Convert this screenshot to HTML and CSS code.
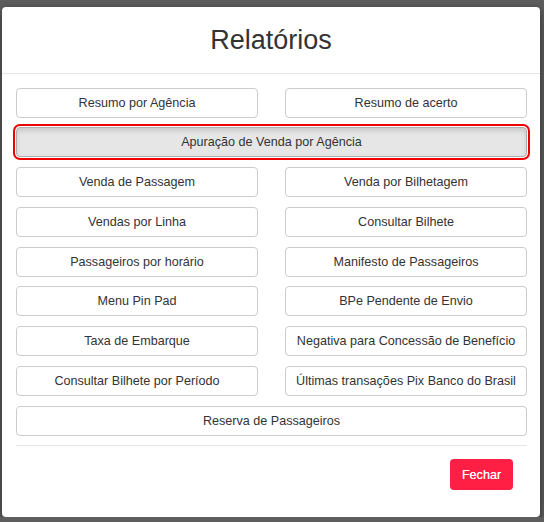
FILE: index.html
```html
<!DOCTYPE html>
<html lang="pt-BR">
<head>
  <meta charset="UTF-8">
  <meta name="viewport" content="width=device-width, initial-scale=1.0">
  <title>Relatórios</title>
  <link rel="stylesheet" href="styles.css">
</head>
<body>
  <div class="modal">
    <div class="modal-header">
      <h4>Relatórios</h4>
    </div>

    <!-- Report buttons -->
    <div class="modal-body">
      <button class="btn">Resumo por Agência</button>
      <button class="btn">Resumo de acerto</button>
      <button class="btn btn-wide active">Apuração de Venda por Agência</button>
      <button class="btn">Venda de Passagem</button>
      <button class="btn">Venda por Bilhetagem</button>
      <button class="btn">Vendas por Linha</button>
      <button class="btn">Consultar Bilhete</button>
      <button class="btn">Passageiros por horário</button>
      <button class="btn">Manifesto de Passageiros</button>
      <button class="btn">Menu Pin Pad</button>
      <button class="btn">BPe Pendente de Envio</button>
      <button class="btn">Taxa de Embarque</button>
      <button class="btn">Negativa para Concessão de Benefício</button>
      <button class="btn">Consultar Bilhete por Período</button>
      <button class="btn">Últimas transações Pix Banco do Brasil</button>
      <button class="btn btn-wide">Reserva de Passageiros</button>
    </div>

    <div class="divider"></div>

    <div class="modal-footer">
      <button class="btn-close">Fechar</button>
    </div>
  </div>
</body>
</html>
```

FILE: styles.css
```css
body {
  margin: 0;
  background-color: #5d5d5d;
  font-family: "Liberation Sans", Arial, sans-serif;
  color: #333;
}

.modal {
  width: 538px;
  height: 510px;
  margin: 7px 0 0 2px;
  background-color: white;
  border-radius: 4px;
  box-shadow: 0 3px 9px rgba(0, 0, 0, 0.5);
  box-sizing: border-box;
}

.modal-header {
  height: 66px;
  display: flex;
  align-items: center;
  justify-content: center;
  border-bottom: 1px solid #e5e5e5;
}

.modal-header h4 {
  margin: 0;
  font-size: 27px;
  font-weight: normal;
  color: #333;
}

.modal-body {
  display: grid;
  grid-template-columns: 1fr 1fr;
  gap: 9.75px 27px;
  padding: 13.5px 13px 0 14px;
}

.btn {
  height: 30px;
  padding: 0 6px;
  font-family: inherit;
  font-size: 12.6px;
  color: #333;
  background-color: white;
  border: 1px solid #ccc;
  border-radius: 4px;
  white-space: nowrap;
  cursor: pointer;
}

.btn-wide {
  grid-column: span 2;
}

/* selected report */
.btn.active {
  background-color: #e6e6e6;
  border-color: #adadad;
  box-shadow: inset 0 3px 5px rgba(0, 0, 0, 0.125), 0 0 0 1px #fff, 0 0 0 3px #ee0000;
}

.divider {
  border-bottom: 1px solid #e5e5e5;
  margin: 9.5px 13px 0 14px;
}

.modal-footer {
  display: flex;
  justify-content: flex-end;
  padding: 13px 27px 0 0;
}

.btn-close {
  width: 63px;
  height: 31px;
  font-family: inherit;
  font-size: 12.6px;
  color: white;
  background-color: #ff1f45;
  border: none;
  border-radius: 4px;
  text-shadow: 0 0 0.4px white;
  cursor: pointer;
}
```
